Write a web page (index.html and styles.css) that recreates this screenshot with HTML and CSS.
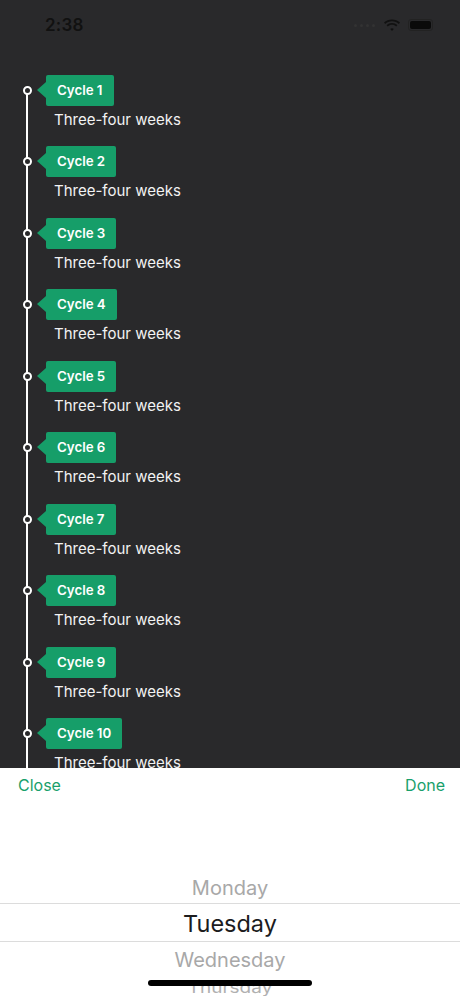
FILE: index.html
```html
<!DOCTYPE html>
<html>
<head>
<meta charset="utf-8">
<link rel="stylesheet" href="styles.css">
</head>
<body>
<div class="screen">
  <div class="status">
    <span class="time">2:38</span>
    <div class="status-icons">
      <span class="dots"><i></i><i></i><i></i><i></i></span>
      <svg class="wifi" width="18" height="13" viewBox="0 0 18 13">
        <path d="M9 2.2c2.6 0 5 1 6.8 2.7l1.2-1.3C14.9 1.6 12.1 0.4 9 0.4S3.1 1.6 1 3.6l1.2 1.3C4 3.2 6.4 2.2 9 2.2z" fill="#111"/>
        <path d="M9 5.8c1.6 0 3.1 0.6 4.2 1.7l1.2-1.3C13 4.8 11.1 4 9 4S5 4.8 3.6 6.2l1.2 1.3C5.9 6.4 7.4 5.8 9 5.8z" fill="#111"/>
        <path d="M9 9.3c0.7 0 1.3 0.3 1.8 0.7L9 12l-1.8-2c0.5-0.4 1.1-0.7 1.8-0.7z" fill="#111"/>
      </svg>
      <span class="battery"><span class="level"></span></span>
    </div>
  </div>
  <div class="content">
    <div class="timeline">
      <div class="row"><div class="head"><span class="node"></span><span class="tag">Cycle 1</span></div><div class="sub">Three-four weeks</div></div>
      <div class="row"><div class="head"><span class="node"></span><span class="tag">Cycle 2</span></div><div class="sub">Three-four weeks</div></div>
      <div class="row"><div class="head"><span class="node"></span><span class="tag">Cycle 3</span></div><div class="sub">Three-four weeks</div></div>
      <div class="row"><div class="head"><span class="node"></span><span class="tag">Cycle 4</span></div><div class="sub">Three-four weeks</div></div>
      <div class="row"><div class="head"><span class="node"></span><span class="tag">Cycle 5</span></div><div class="sub">Three-four weeks</div></div>
      <div class="row"><div class="head"><span class="node"></span><span class="tag">Cycle 6</span></div><div class="sub">Three-four weeks</div></div>
      <div class="row"><div class="head"><span class="node"></span><span class="tag">Cycle 7</span></div><div class="sub">Three-four weeks</div></div>
      <div class="row"><div class="head"><span class="node"></span><span class="tag">Cycle 8</span></div><div class="sub">Three-four weeks</div></div>
      <div class="row"><div class="head"><span class="node"></span><span class="tag">Cycle 9</span></div><div class="sub">Three-four weeks</div></div>
      <div class="row"><div class="head"><span class="node"></span><span class="tag">Cycle 10</span></div><div class="sub">Three-four weeks</div></div>
    </div>
  </div>
  <div class="sheet">
    <div class="toolbar">
      <span class="btn">Close</span>
      <span class="btn">Done</span>
    </div>
    <div class="picker">
      <div class="item side">Monday</div>
      <div class="item selected">Tuesday</div>
      <div class="item side">Wednesday</div>
      <div class="item far">Thursday</div>
    </div>
  </div>
  <div class="home-indicator"></div>
</div>
</body>
</html>
```
FILE: styles.css
```css
* { box-sizing: border-box; }
html, body { margin: 0; padding: 0; }
body {
  width: 460px;
  height: 996px;
  overflow: hidden;
  background: #29292b;
  font-family: Inter, "Noto Sans", "Liberation Sans", sans-serif;
}
.screen {
  position: relative;
  width: 460px;
  height: 996px;
  display: flex;
  flex-direction: column;
  overflow: hidden;
}
.status {
  height: 50px;
  flex: none;
  display: flex;
  align-items: center;
  justify-content: space-between;
  padding: 0 27px 0 45px;
}
.time {
  font-size: 17px;
  font-weight: 600;
  color: #111;
  letter-spacing: 0.2px;
}
.status-icons {
  display: flex;
  align-items: center;
  gap: 6px;
}
.dots { display: flex; gap: 3px; margin-right: 2px; }
.dots i {
  display: block;
  width: 3px;
  height: 3px;
  border-radius: 50%;
  background: #333;
}
.battery {
  position: relative;
  width: 25px;
  height: 12px;
  border-radius: 3px;
  border: 1px solid #222;
  padding: 1px;
  display: flex;
  margin-left: 1px;
}
.battery .level { flex: 1; background: #0a0a0a; border-radius: 2px; }
.content {
  flex: 1;
  min-height: 0;
  overflow: hidden;
  position: relative;
}
.timeline {
  position: relative;
  padding-top: 25px;
  min-height: 100%;
}
.timeline::before {
  content: "";
  position: absolute;
  left: 26px;
  top: 40px;
  bottom: 0;
  width: 2px;
  background: #fff;
}
.row {
  height: 71.45px;
  display: flex;
  flex-direction: column;
}
.head {
  display: flex;
  align-items: center;
  height: 31px;
}
.node {
  position: relative;
  z-index: 1;
  width: 9px;
  height: 9px;
  border-radius: 50%;
  border: 2px solid #fff;
  background: #29292b;
  margin-left: 22.5px;
}
.tag {
  position: relative;
  margin-left: 14.5px;
  height: 31px;
  line-height: 31px;
  padding: 0 11px 0 11px;
  background: #169e69;
  color: #fff;
  font-size: 13.3px;
  font-weight: 600;
  border-radius: 2px;
}
.tag::before {
  content: "";
  position: absolute;
  left: -9px;
  top: 7px;
  border-right: 9px solid #169e69;
  border-top: 8.5px solid transparent;
  border-bottom: 8.5px solid transparent;
}
.sub {
  margin-left: 54px;
  margin-top: 4px;
  font-size: 15px;
  color: #f2f2f2;
  line-height: 20px;
}
.sheet {
  flex: none;
  height: 228px;
  background: #fff;
  display: flex;
  flex-direction: column;
}
.toolbar {
  display: flex;
  justify-content: space-between;
  align-items: center;
  height: 38px;
  padding: 1px 15px 0 18px;
}
.btn {
  color: #19a06b;
  font-size: 16px;
}
.picker {
  margin-top: 69px;
  display: flex;
  flex-direction: column;
  align-items: stretch;
}
.item {
  text-align: center;
  line-height: 1;
}
.item.side {
  color: #a8a8a8;
  font-size: 20px;
  height: 34px;
  line-height: 36px;
}
.item.side:first-child { height: 33px; line-height: 36px; }
.item.selected {
  color: #1c1c1e;
  font-size: 23.5px;
  height: 39px;
  line-height: 39px;
  border-top: 1px solid #dcdcdc;
  border-bottom: 1px solid #dcdcdc;
}
.item.far {
  color: #b0b0b0;
  font-size: 19px;
  height: 20px;
  line-height: 26px;
  transform: scaleY(0.8);
}
.home-indicator {
  position: absolute;
  left: 148px;
  bottom: 10px;
  width: 164px;
  height: 6px;
  border-radius: 3px;
  background: #000;
}
```
